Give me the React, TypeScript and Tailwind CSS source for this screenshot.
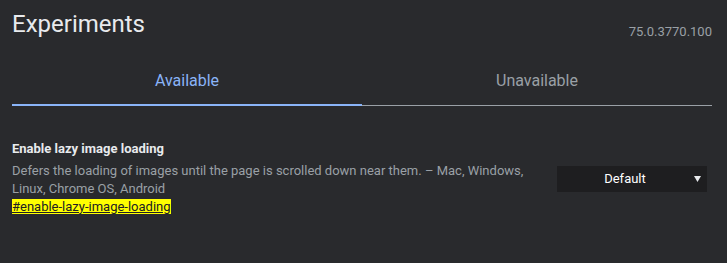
import React from "react";

export default function App() {
  return (
    <div
      className="w-[727px] h-[263px] bg-[#292a2d] pt-[10px] pl-[12px] pr-[15px] overflow-hidden"
      style={{ fontFamily: "Roboto, 'Liberation Sans', sans-serif" }}
    >
      <div className="flex justify-between items-start h-[40px]">
        <h1 className="text-[24px] leading-[28px] text-[#e8eaed] font-normal">Experiments</h1>
        <div className="mt-[13.5px] text-[13px] leading-[16px] text-[#9aa0a6]">75.0.3770.100</div>
      </div>
      <div className="flex w-[700px]">
        <div className="flex-1 text-center pt-[21px] pb-[14px] text-[16px] leading-[19px] text-[#8ab4f8] border-b-2 border-[#8ab4f8]">
          Available
        </div>
        <div className="flex-1 text-center pt-[21px] pb-[15px] text-[16px] leading-[19px] text-[#9aa0a6] border-b border-[#9aa0a6]">
          Unavailable
        </div>
      </div>
      <div className="flex items-start mt-[33.5px] w-[700px]">
        <div className="w-[530px]">
          <div className="text-[13px] leading-[18px] font-bold text-[#e8eaed]">Enable lazy image loading</div>
          <div className="mt-[4px] text-[13px] leading-[18px] text-[#9aa0a6]">
            Defers the loading of images until the page is scrolled down near them. – Mac, Windows, Linux, Chrome OS, Android
          </div>
          <div className="text-[13px] leading-[18px]">
            <a className="bg-[#ffff00] text-[#202124] underline">#enable-lazy-image-loading</a>
          </div>
        </div>
        <div className="ml-auto mr-[5px] mt-[26.5px] relative w-[150px] h-[26px] bg-[#1e1e20] flex items-center justify-center pr-[14px]">
          <span className="text-[13px] leading-[16px] text-white">Default</span>
          <svg className="absolute right-[6px] top-[10px]" width="7" height="6" viewBox="0 0 7 6">
            <polygon points="0,0 7,0 3.5,6" fill="#e8eaed" />
          </svg>
        </div>
      </div>
    </div>
  );
}
